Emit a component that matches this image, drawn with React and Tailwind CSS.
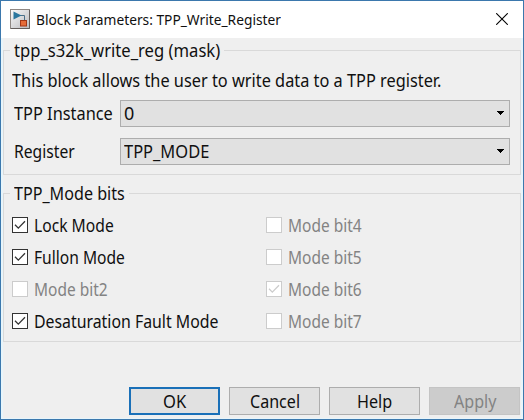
import { useLayoutEffect, useRef } from "react";

// Single line of text condensed to the given advance width.
function Text({ children, width, className = "" }) {
  const ref = useRef(null);
  useLayoutEffect(() => {
    const el = ref.current;
    el.style.transform = `scaleX(${width / el.offsetWidth})`;
  }, [width, children]);
  return (
    <span className={`block shrink-0 text-left ${className}`} style={{ width }}>
      <span ref={ref} className="inline-block origin-left whitespace-nowrap">
        {children}
      </span>
    </span>
  );
}

function Group({ title, width, className, children }) {
  return (
    <section className={`border border-[#d9d9d9] ${className}`}>
      <h2 className="-mt-[13px] ml-[6px] flex h-6 w-fit bg-[#efefef] px-1">
        <Text width={width}>{title}</Text>
      </h2>
      {children}
    </section>
  );
}

function Select({ label, labelWidth, value, valueWidth }) {
  return (
    <div className="flex h-[27px] items-center">
      <div className="w-[107px] pb-[2px] pl-px">
        <Text width={labelWidth}>{label}</Text>
      </div>
      <div className="flex h-[27px] w-[390px] items-center justify-between border border-[#adadad] bg-[#e1e1e1] pl-[3px] pr-[5px]">
        <Text width={valueWidth} className="pb-[2px]">{value}</Text>
        <svg width="7" height="4" viewBox="0 0 7 4" shapeRendering="crispEdges" className="mb-[1px]">
          <path d="M0 0h7v1h-1v1h-1v1h-1v1h-1v-1h-1v-1h-1v-1h-1z" fill="#000" />
        </svg>
      </div>
    </div>
  );
}

function Check({ label, width, checked, disabled }) {
  return (
    <div className="flex h-8 items-center">
      <span
        className={`flex h-4 w-4 items-center justify-center border bg-white ${disabled ? "border-[#cccccc]" : "border-[#333333]"}`}
      >
        {checked && (
          <svg width="14" height="14" viewBox="0 0 14 14" fill="none">
            <path d="M2 6.8L5.3 10.1L12 3.3" stroke={disabled ? "#cccccc" : "#333333"} strokeWidth="1.3" />
          </svg>
        )}
      </span>
      <Text width={width} className={`ml-[6px] ${disabled ? "text-[#838383]" : ""}`}>
        {label}
      </Text>
    </div>
  );
}

function Button({ label, width, className }) {
  return (
    <button className={`flex h-7 w-[91px] items-center justify-center ${className}`}>
      <Text width={width}>{label}</Text>
    </button>
  );
}

function BlockIcon() {
  return (
    <svg width="20" height="20" viewBox="0 0 20 20">
      <defs>
        <linearGradient id="tile" x1="0" y1="0" x2="1" y2="1">
          <stop offset="0" stopColor="#fafafa" />
          <stop offset="1" stopColor="#b9b9bd" />
        </linearGradient>
      </defs>
      <rect x="0.5" y="0.5" width="19" height="19" fill="url(#tile)" stroke="#8e8783" />
      <path d="M19.5 1v18.5H1" fill="none" stroke="#645e5c" />
      <path d="M10 6.5h4.5V12" fill="none" stroke="#4b6e87" />
      <path d="M3.5 2.5L11.5 6.5L3.5 10.5z" fill="#2b779e" />
      <rect x="10.5" y="11.5" width="6" height="5.5" fill="#e66b38" stroke="#a23716" />
    </svg>
  );
}

export default function App() {
  return (
    <main className="flex h-[420px] w-[524px] flex-col overflow-hidden border border-[#3b78ad] bg-[#efefef] font-['Noto_Sans',sans-serif] text-[18px] leading-6 text-[#101010]">
      <header className="flex h-[37px] shrink-0 items-center bg-white pb-px pl-[9px] pr-[15px] text-[15px]">
        <BlockIcon />
        <Text width={245} className="ml-[6px]">Block Parameters: TPP_Write_Register</Text>
        <svg width="12" height="12" viewBox="0 0 12 12" className="ml-auto">
          <path d="M0.2 0.2L11.8 11.8M11.8 0.2L0.2 11.8" stroke="#000" strokeWidth="1.1" />
        </svg>
      </header>
      <div className="flex grow flex-col border-x-2 border-b border-[#e7f5fb] px-0 pb-[3px] pt-3">
        <Group title="tpp_s32k_write_reg (mask)" width={206} className="h-[125px]">
          <div className="pl-[8px] pt-[6px]">
            <Text width={429}>This block allows the user to write data to a TPP register.</Text>
          </div>
          <div className="flex flex-col gap-[11px] pl-[9px] pt-[8px]">
            <Select label="TPP Instance" labelWidth={99} value="0" valueWidth={10} />
            <Select label="Register" labelWidth={61} value="TPP_MODE" valueWidth={85} />
          </div>
        </Group>
        <Group title="TPP_Mode bits" width={111} className="mt-[18px] h-[149px]">
          <div className="flex pl-[8px] pt-[4px]">
            <div className="w-[254px]">
              <Check label="Lock Mode" width={80} checked />
              <Check label="Fullon Mode" width={91} checked />
              <Check label="Mode bit2" width={74} disabled />
              <Check label="Desaturation Fault Mode" width={184} checked />
            </div>
            <div>
              <Check label="Mode bit4" width={74} disabled />
              <Check label="Mode bit5" width={74} disabled />
              <Check label="Mode bit6" width={74} checked disabled />
              <Check label="Mode bit7" width={74} disabled />
            </div>
          </div>
        </Group>
        <footer className="mt-auto flex justify-end gap-[9px] pr-px">
          <Button label="OK" width={23} className="border-2 border-[#1a70b8] bg-[#e1e1e1]" />
          <Button label="Cancel" width={50} className="border border-[#adadad] bg-[#e1e1e1]" />
          <Button label="Help" width={35} className="border border-[#adadad] bg-[#e1e1e1]" />
          <Button label="Apply" width={42} className="border border-[#c4c4c4] bg-[#cccccc] text-[#838383]" />
        </footer>
      </div>
    </main>
  );
}
